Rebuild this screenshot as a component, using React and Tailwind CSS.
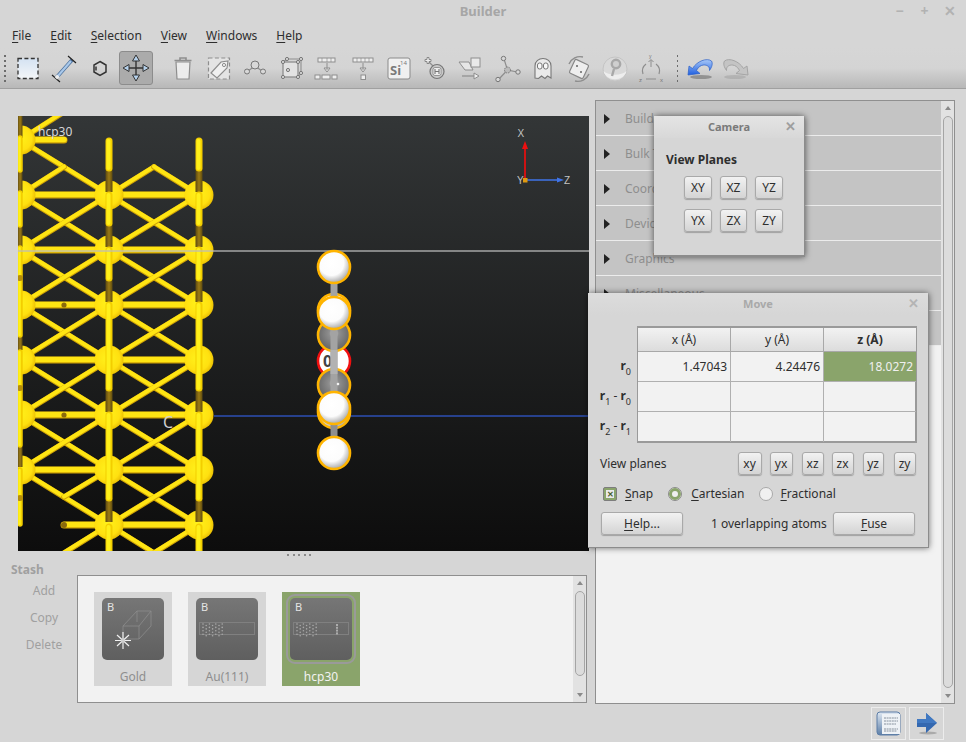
import React from "react";

const G = "#8e8e8e";
const U = ({ c }) => <span className="underline underline-offset-2">{c}</span>;

function Ic({ children, w = 36 }) {
  return (
    <svg width={w} height="36" viewBox={`0 0 ${w} 36`} fill="none" className="shrink-0">
      {children}
    </svg>
  );
}

const ball = (x, y, r = 2.5) => <circle cx={x} cy={y} r={r} fill="#d8d8d8" stroke="#777" strokeWidth="1" />;

const selIcon = (
  <Ic key="a">
    <defs><linearGradient id="sel" x1="0" y1="0" x2="0" y2="1"><stop offset="0" stopColor="#d4e2f2" /><stop offset="1" stopColor="#f4f6f8" /></linearGradient></defs>
    <rect x="8" y="8.5" width="20" height="20" fill="url(#sel)" stroke="#333" strokeWidth="1.3" strokeDasharray="4 2.4" />
  </Ic>
);
const measureIcon = (
  <Ic key="b">
    <path d="M10 28 L26 10" stroke="#4a6f9a" strokeWidth="3.6" />
    <path d="M11 27 L25 11" stroke="#a9c8ea" strokeWidth="2.2" />
    <path d="M6 25 L14 32 M22 6 L30 13" stroke="#222" strokeWidth="1.2" />
    <rect x="9.5" y="25" width="3.5" height="3.5" fill="#eee" transform="rotate(45 11 26.7)" />
  </Ic>
);
const hexIcon = (
  <Ic key="c">
    <path d="M18 11.5 L24 15 V22 L18 25.5 L12 22 V15 Z" stroke="#333" strokeWidth="1.5" fill="none" />
    <path d="M14 16.5 V20.5" stroke="#333" strokeWidth="1.5" />
  </Ic>
);

const toolIcons2 = [
  <Ic key="e">
    <path d="M11 12 H25 L24 29 H12 Z" fill="#ececec" stroke={G} strokeWidth="1.2" />
    <path d="M9.5 10.5 H26.5 M15 10 V8 H21 V10" stroke={G} strokeWidth="1.6" />
  </Ic>,
  <Ic key="f">
    <rect x="7.5" y="8" width="21" height="21" fill="#e4e4e4" stroke={G} strokeWidth="1.2" strokeDasharray="4 2.4" />
    <path d="M10 23 L20 12 L27 11 L26 18 L16 28 Z" fill="#f0f0f0" stroke={G} strokeWidth="1.2" />
    <circle cx="23" cy="15" r="1.6" stroke={G} />
  </Ic>,
  <Ic key="g">
    <path d="M11 21 L18 16 L25 21" stroke={G} strokeWidth="1.2" />
    {ball(18, 15, 4)}{ball(10, 21.5, 2.5)}{ball(26, 21.5, 2.5)}
  </Ic>,
  <Ic key="h">
    <rect x="10" y="12" width="15" height="15" fill="#e2e2e2" stroke={G} strokeWidth="1.3" />
    <path d="M10 12 L14 9 H28 V23 L25 27" stroke={G} strokeWidth="1.1" />
    {ball(10, 12, 1.6)}{ball(25, 12, 1.6)}{ball(10, 27, 1.6)}{ball(25, 27, 1.6)}{ball(14, 9, 1.6)}{ball(28, 9, 1.6)}{ball(28, 23, 1.6)}{ball(15, 20, 1.6)}
  </Ic>,
  <Ic key="i">
    <rect x="9" y="8" width="17" height="4" fill="#eee" stroke={G} />
    <path d="M13 8 V12 M18 8 V12 M22 8 V12" stroke={G} strokeWidth="0.7" />
    <path d="M18 13 V20 M15 18 L18 22 L21 18 Z" stroke={G} fill="#eee" />
    <rect x="6" y="25" width="5" height="4" fill="#eee" stroke={G} /><rect x="13" y="25" width="8" height="4" fill="#eee" stroke={G} /><rect x="23" y="25" width="5" height="4" fill="#eee" stroke={G} />
  </Ic>,
  <Ic key="j">
    <rect x="8" y="8" width="20" height="4" fill="#eee" stroke={G} />
    <path d="M12 8 V12 M16 8 V12 M20 8 V12 M24 8 V12" stroke={G} strokeWidth="0.7" />
    <path d="M18 13 V20 M15 18 L18 22 L21 18 Z" stroke={G} fill="#eee" />
    <rect x="16" y="25" width="4.5" height="4.5" fill="#eee" stroke={G} />
  </Ic>,
];

const toolIcons3 = [
  <Ic key="l">
    <path d="M12 12 L17 17" stroke={G} strokeWidth="1.2" />
    <path d="M8 9.5 H10 V7.5 H12 V9.5 H14 V11.5 H12 V13.5 H10 V11.5 H8 Z" fill="#eee" stroke="#777" strokeWidth="0.8" />
    <circle cx="20" cy="21.5" r="7" fill="#c9c9c9" stroke="#777" strokeWidth="1.2" />
    <rect x="16" y="17.5" width="8" height="8" rx="2" fill="#eee" stroke="#777" strokeWidth="0.7" />
    <path d="M18 19 V24 M22 19 V24 M18 21.5 H22" stroke="#777" strokeWidth="1.1" />
  </Ic>,
  <Ic key="m">
    <path d="M6 12 H16 L20 20 H12 Z" fill="#e6e6e6" stroke={G} />
    <rect x="18" y="8" width="9" height="9" fill="#e9e9e9" stroke={G} />
    <path d="M9 26 H22" stroke={G} strokeWidth="1.2" />
    <path d="M21 23 L26 26 L21 29 Z" fill="#eee" stroke={G} />
  </Ic>,
  <Ic key="n">
    <path d="M18.5 20 L15 9 M18.5 20 L28 22 M18.5 20 L10 29" stroke={G} strokeWidth="1.2" />
    {ball(14.5, 8.5, 2.2)}{ball(29, 22, 2.2)}{ball(9, 29.5, 2.2)}
    <circle cx="18.5" cy="20" r="3" fill="#bbb" stroke="#777" strokeDasharray="1.5 1" />
  </Ic>,
  <Ic key="o">
    <path d="M10 28 V16 C10 6 26 6 26 16 V28 L22.5 26 L20 28.5 L16.5 26 L13.5 28.5 Z" fill="#eaeaea" stroke="#777" strokeWidth="1.1" />
    <rect x="12.5" y="13" width="4.5" height="6" rx="2" fill="#f8f8f8" stroke="#777" />
    <rect x="18.5" y="13" width="4.5" height="6" rx="2" fill="#f8f8f8" stroke="#777" />
  </Ic>,
  <Ic key="p">
    <rect x="10.5" y="11.5" width="15" height="15" rx="1.5" fill="#eee" stroke="#888" strokeWidth="1.2" transform="rotate(25 18 19)" />
    <path d="M8 14 A12 12 0 0 1 22 7 M28 24 A12 12 0 0 1 14 31" stroke={G} strokeWidth="1.4" />
    <circle cx="16" cy="16" r="1" fill="#666" /><circle cx="20" cy="22" r="1" fill="#666" />
  </Ic>,
  <Ic key="q">
    <circle cx="18" cy="19" r="12" fill="#d9d9d9" stroke="#c4c4c4" />
    <path d="M6.5 21 C12 26 24 26 29.5 21 C27 32 9 32 6.5 21 Z" fill="#eeeeee" />
    <circle cx="19" cy="14" r="4.2" stroke="#a8a8a8" strokeWidth="2.4" fill="#cfcfcf" />
    <path d="M17 19 L15 26" stroke="#a8a8a8" strokeWidth="2.4" />
  </Ic>,
  <Ic key="r">
    <path d="M18 17 V10 M15.5 12 L18 9.5 L20.5 12" stroke={G} strokeWidth="1" />
    <path d="M10 24 A9 9 0 0 1 13 14 M26 24 A9 9 0 0 0 23 14 M13 29 H23" stroke={G} strokeWidth="1.2" />
    <text x="16" y="8" fontSize="5" fill="#777" fontFamily="Liberation Sans">y</text>
    <text x="6" y="32" fontSize="6" fill="#777" fontFamily="Liberation Sans">z</text>
    <text x="27" y="32" fontSize="6" fill="#777" fontFamily="Liberation Sans">x</text>
  </Ic>,
];

const Undo = () => (
  <Ic>
    <defs><linearGradient id="un" x1="0" y1="0" x2="0" y2="1"><stop offset="0" stopColor="#a8c8f8" /><stop offset="1" stopColor="#1f5fe0" /></linearGradient></defs>
    <ellipse cx="19" cy="27" rx="11" ry="2" fill="#666" opacity="0.55" />
    <path d="M6 25 L7 16 L10.5 18.5 C15 11 25 7.5 29.5 11 C31 13.5 30 17 27.5 20.5 C28 16 24 14 19.5 15.5 C17 16.5 15.5 18.5 14.5 20.5 L18 23.5 Z" fill="url(#un)" stroke="#2a5fc7" strokeWidth="0.7" />
  </Ic>
);
const Redo = () => (
  <Ic>
    <ellipse cx="17" cy="27" rx="11" ry="2" fill="#999" opacity="0.45" />
    <path d="M30 25 L29 16 L25.5 18.5 C21 11 11 7.5 6.5 11 C5 13.5 6 17 8.5 20.5 C8 16 12 14 16.5 15.5 C19 16.5 20.5 18.5 21.5 20.5 L18 23.5 Z" fill="#c4c4c4" stroke="#a5a5a5" strokeWidth="1" />
  </Ic>
);

const Dots = ({ className }) => (
  <div className={`flex flex-col gap-[3px] ${className}`}>
    {[0, 1, 2, 3, 4, 5].map((i) => <span key={i} className="block w-[1.5px] h-[2px] bg-[#6c6c6c]" />)}
  </div>
);

/* ------- 3D viewport drawing ------- */
const X1 = 20, X2 = 109, X3 = 199, XM1 = 64, XM2 = 154;
const rows = [140, 195, 250, 305, 360, 415, 470, 525];

function bond(x1, y1, x2, y2, k, w = 5.5) {
  return (
    <g key={k}>
      <line x1={x1} y1={y1} x2={x2} y2={y2} stroke="#cfa206" strokeWidth={w} strokeLinecap="round" />
      <line x1={x1} y1={y1 - 0.5} x2={x2} y2={y2 - 0.5} stroke="#ffe513" strokeWidth={w - 1.4} strokeLinecap="round" />
    </g>
  );
}
const hbond = (x1, y, x2, k) => bond(x1, y, x2, y, k, 7);
const dark = (x, y1, y2, k, w = 7) => (
  <rect key={k} x={x - w / 2} y={y1} width={w} height={y2 - y1} fill="url(#darkbar)" />
);
const vbar = (x, y1, y2, k, w = 7) => (
  <g key={k}>
    <line x1={x} y1={y1} x2={x} y2={y2} stroke="#f3ce00" strokeWidth={w} strokeLinecap="round" />
    <line x1={x - 0.5} y1={y1} x2={x - 0.5} y2={y2} stroke="#fff01a" strokeWidth={w - 3} strokeLinecap="round" />
  </g>
);

function Viewport() {
  const b = [];
  for (let i = 1; i < 7; i++) {
    const a = rows[i], c = rows[i + 1];
    b.push(bond(X2, a, X3, c, `d1${i}`));
    b.push(bond(X2, c, X3, a, `d2${i}`));
    b.push(bond(X1, a, X2, c, `d3${i}`));
    if (i < 5) b.push(bond(X1, c, X2, a, `d4${i}`));
  }
  b.push(bond(X1, 470, X2, 415, "d5"));
  b.push(bond(XM1, 497, X2, 470, "d6"));
  b.push(bond(X1, 140, X2, 195, "t1"));
  b.push(bond(X1, 195, XM1, 167, "t2"));
  b.push(bond(X1, 140, XM1, 112, "t3"));
  b.push(bond(X2, 195, XM2, 167, "t4"));
  b.push(bond(XM2, 167, X3, 195, "t5"));
  b.push(bond(X2, 525, XM1, 553, "e1"));
  b.push(bond(X2, 525, XM2, 553, "e2"));
  b.push(bond(X3, 525, XM2, 553, "e3"));
  b.push(hbond(X1, 140, XM1, "h0"));
  rows.slice(1).forEach((y, i) => {
    b.push(hbond(y === 525 ? XM1 : X1, y, X2, `ha${i}`));
    b.push(hbond(X2, y, X3, `hb${i}`));
  });
  const spheres = [];
  rows.forEach((y, i) => {
    if (i < 7) spheres.push(<circle key={`s1${i}`} cx={X1 + 1} cy={y} r="14.5" fill="url(#gold)" />);
    if (i > 0) {
      spheres.push(<circle key={`s2${i}`} cx={X2} cy={y} r="14.5" fill="url(#gold)" />);
      spheres.push(<circle key={`s3${i}`} cx={X3} cy={y} r="14.5" fill="url(#gold)" />);
    }
  });
  const v = [];
  [X2, X3].forEach((x, j) => {
    [[168, 192], [223, 247], [278, 302], [388, 412], [498, 522]].forEach(([a, c], i) =>
      v.push(dark(x, a, c, `dk${j}${i}`)));
    [[141, 168], [195, 223], [250, 278], [305, 388], [415, 498]].forEach(([a, c], i) =>
      v.push(vbar(x, a, c, `v${j}${i}`)));
    v.push(vbar(x, 527, 560, `vz${j}`));
  });
  const x1v = [
    dark(20, 116, 138, "k1", 5), dark(20, 170, 193, "k2", 5), dark(20, 225, 247, "k3", 5), dark(20, 447, 467, "k4", 5), dark(20, 335, 350, "k5", 5),
    vbar(20, 138, 170, "c1a", 5.5), vbar(20, 193, 225, "c1b", 5.5), vbar(20, 248, 335, "c1c", 5.5),
    vbar(20, 352, 445, "c1d", 5.5), vbar(20, 470, 524, "c1e", 5.5),
  ];
  const white = (y, k) => <circle key={k} cx="334" cy={y} r="16" fill="url(#white)" stroke="#ffb400" strokeWidth="2.6" />;
  const grey = (y, k) => <circle key={k} cx="334" cy={y} r="16" fill="url(#grey)" stroke="#ffb400" strokeWidth="2.6" />;

  return (
    <svg width="571" height="435" viewBox="18 116 571 435" className="block absolute inset-0">
      <defs>
        <radialGradient id="gold" cx="0.45" cy="0.45" r="0.6">
          <stop offset="0" stopColor="#fff21a" /><stop offset="0.7" stopColor="#ffe010" /><stop offset="1" stopColor="#e6b800" />
        </radialGradient>
        <radialGradient id="white" cx="0.42" cy="0.38" r="0.7">
          <stop offset="0" stopColor="#ffffff" /><stop offset="0.55" stopColor="#fcfcfc" /><stop offset="1" stopColor="#8f8f8f" />
        </radialGradient>
        <radialGradient id="grey" cx="0.5" cy="0.45" r="0.6">
          <stop offset="0" stopColor="#d8d8d8" /><stop offset="0.25" stopColor="#8f8f8f" /><stop offset="1" stopColor="#5e5e5e" />
        </radialGradient>
        <linearGradient id="darkbar" x1="0" y1="0" x2="1" y2="0">
          <stop offset="0" stopColor="#5e4a10" /><stop offset="0.5" stopColor="#9a7a15" /><stop offset="1" stopColor="#5e4a10" />
        </linearGradient>
      </defs>
      {b}
      {spheres}
      {v}
      {x1v}
      <circle cx="64" cy="305" r="2.6" fill="#8a6a0c" />
      <circle cx="64" cy="415" r="2.6" fill="#8a6a0c" />
      <circle cx="64" cy="525" r="3" fill="#8a6a0c" />
      <circle cx="20" cy="278" r="3" fill="#b58d08" />
      <circle cx="20" cy="388" r="3" fill="#b58d08" />
      <circle cx="20" cy="498" r="3" fill="#b58d08" />
      <line x1="18" y1="251" x2="589" y2="251" stroke="#bdbdbd" strokeWidth="1.6" opacity="0.85" />
      <line x1="214" y1="416" x2="589" y2="416" stroke="#2c4fb4" strokeWidth="1.6" />

      <circle cx="334" cy="361" r="16" fill="#ffffff" stroke="#f01010" strokeWidth="2.6" />
      <text x="323" y="367" fontSize="16" fontWeight="700" fill="#444" fontFamily="Noto Sans, sans-serif">0</text>
      {grey(335, "g1")}{grey(385, "g2")}
      {white(310, "w0")}{white(412, "w1")}
      <rect x="330.5" y="280" width="7" height="140" fill="#a3a3a3" />
      <rect x="330.5" y="350" width="7" height="24" fill="#b2b2b2" />
      <rect x="330.5" y="425" width="7" height="15" fill="#8f8f8f" />
      {white(267, "w2")}{white(313, "w3")}{white(408, "w4")}{white(453, "w5")}
      <circle cx="338" cy="384" r="1.3" fill="#f4f4f4" />

      <text x="163" y="428" fontSize="16" fill="#cfcfcf" fontFamily="Noto Sans, sans-serif">C</text>
      <text x="38" y="136" fontSize="12" fill="#d6d6d6" fontFamily="Noto Sans, sans-serif">hcp30</text>

      <line x1="525" y1="180" x2="525" y2="145" stroke="#e01010" strokeWidth="1.8" />
      <path d="M525 141 L528 149 H522 Z" fill="#ee1010" />
      <line x1="525" y1="180" x2="558" y2="180" stroke="#3f74e8" strokeWidth="1.4" />
      <path d="M564 180 L557 177.5 V182.5 Z" fill="#3f74e8" />
      <rect x="523" y="178" width="4.5" height="4.5" fill="#e09a10" />
      <text x="517.5" y="137" fontSize="10" fill="#c4c4c4" fontFamily="Liberation Sans">X</text>
      <text x="517" y="184" fontSize="10" fill="#c4c4c4" fontFamily="Liberation Sans">Y</text>
      <text x="564" y="184" fontSize="10" fill="#c4c4c4" fontFamily="Liberation Sans">Z</text>
    </svg>
  );
}

/* ------- small widgets ------- */
const btn = "flex items-center justify-center rounded-[3px] border border-[#a9a9a9] bg-gradient-to-b from-[#f2f2f2] to-[#d4d4d4] shadow-[0_1px_1px_rgba(0,0,0,0.25)] text-[#2e2e2e]";

function Scrollbar({ className = "", thumb }) {
  return (
    <div className={`flex flex-col items-center w-[13px] bg-[#e2e2e2] ${className}`}>
      <div className="h-[14px] flex items-center justify-center shrink-0">
        <span className="block border-x-[3.5px] border-x-transparent border-b-[4px] border-b-[#8a8a8a]" />
      </div>
      <div className={`w-[10px] rounded-[5px] border border-[#a5a5a5] bg-[#dcdcdc] ${thumb}`} />
      <div className="flex-1" />
      <div className="h-[14px] flex items-center justify-center shrink-0">
        <span className="block border-x-[3.5px] border-x-transparent border-t-[4px] border-t-[#8a8a8a]" />
      </div>
    </div>
  );
}

function Thumb({ name, sel, children }) {
  return (
    <div className={`w-[78px] h-[94px] flex flex-col items-center pt-[6px] ${sel ? "bg-[#8aa46b] text-[#f2f2f2]" : "bg-[#d6d6d6] text-[#8e8e8e]"}`}>
      <div className={`relative w-[62px] h-[62px] shrink-0 rounded-[5px] bg-gradient-to-b from-[#767676] to-[#5f5f5f] ${sel ? "outline-[2px] outline-offset-[2px] outline-[#9a9a9a]" : ""}`}>
        <span className="absolute left-[5px] top-[1px] text-[11px] leading-[15px] text-[#e4e4e4]">B</span>
        {children}
      </div>
      <span className="mt-[9px] text-[12px] leading-[16px]">{name}</span>
    </div>
  );
}

const Slab = ({ marker }) => (
  <svg width="62" height="62" viewBox="0 0 62 62" className="absolute inset-0">
    <rect x="3.5" y="24.5" width="55" height="12" fill="none" stroke="#808080" />
    {[0, 1, 2, 3, 4, 5, 6].flatMap((i) =>
      [0, 1, 2, 3].map((j) => (
        <circle key={`${i}${j}`} cx={7 + i * 3.2} cy={26 + j * 3.4 + (i % 2) * 1.5} r="0.8" fill="#a8a8a8" />
      ))
    )}
    {marker && <path d="M47 26 V37" stroke="#eee" strokeDasharray="2 0.8" />}
  </svg>
);

const Cube = () => (
  <svg width="62" height="62" viewBox="0 0 62 62" className="absolute inset-0">
    <path d="M21 28 H37 V41 H21 Z M21 28 L35 13 H49 L37 28 M49 13 V28 L37 41 M35 13 V24" stroke="#909090" fill="none" strokeWidth="0.7" />
    <path d="M21 34 V51 M13 42.5 H29 M15 37 L27 48 M27 37 L15 48" stroke="#f0f0f0" strokeWidth="1.2" />
    <circle cx="21" cy="42.5" r="2" fill="#cfcfcf" />
  </svg>
);

const Cell = ({ children, className = "" }) => (
  <div className={`flex items-center justify-end pr-[3px] text-[12px] ${className}`}>{children}</div>
);

const RLabel = ({ children }) => (
  <div className="flex items-center justify-end text-[12px] text-[#2e2e2e] h-[30px] pr-[6px]">{children}</div>
);
const R = ({ n }) => <span className="whitespace-nowrap"><b>r</b><sub className="text-[9px] align-[-3px] leading-none font-normal">{n}</sub></span>;

function MoveDialog() {
  return (
    <div className="absolute left-[588px] top-[293px] w-[341px] h-[255px] bg-[#d6d6d6] rounded-t-[3px] border-b border-r border-[#8c8c8c] shadow-[0_0_6px_rgba(0,0,0,0.55)] flex flex-col z-20">
      <div className="relative h-[22px] shrink-0 flex items-center justify-center text-[11px] font-bold text-[#a9a9a9] pt-[1px] bg-gradient-to-b from-[#dcdcdc] to-[#d6d6d6]">
        Move
        <span className="absolute right-[9px] top-[2px] text-[13px] leading-[16px] text-[#b4b4b4]">✕</span>
      </div>
      <div className="flex pl-[3px] mt-[11px]">
        <div className="w-[46px] mt-[25px]">
          <RLabel><R n="0" /></RLabel>
          <RLabel><span className="whitespace-nowrap"><R n="1" /> - <R n="0" /></span></RLabel>
          <RLabel><span className="whitespace-nowrap"><R n="2" /> - <R n="1" /></span></RLabel>
        </div>
        <div className="w-[280px] h-[117px] border-2 border-[#9a9a9a] border-l-[1.5px] bg-[#f2f2f2] text-[#2e2e2e] grid grid-cols-[93px_93px_92px] grid-rows-[24px_30px_30px_30px]">
          {["x (Å)", "y (Å)"].map((t) => (
            <div key={t} className="flex items-center justify-center text-[12px] bg-gradient-to-b from-[#f2f2f2] to-[#dcdcdc] border-r border-b border-[#a8a8a8]">{t}</div>
          ))}
          <div className="flex items-center justify-center text-[12px] font-bold bg-gradient-to-b from-[#f2f2f2] to-[#dcdcdc] border-b border-[#a8a8a8]">z (Å)</div>
          <Cell className="border-r border-b border-[#b0b0b0]">1.47043</Cell>
          <Cell className="border-r border-b border-[#b0b0b0]">4.24476</Cell>
          <Cell className="bg-[#8aa46b] text-[#f0f0f0] border-b border-[#b0b0b0]">18.0272</Cell>
          <Cell className="border-r border-b border-[#b0b0b0]" /><Cell className="border-r border-b border-[#b0b0b0]" /><Cell className="border-b border-[#b0b0b0]" />
          <Cell className="border-r border-[#b0b0b0]" /><Cell className="border-r border-[#b0b0b0]" /><Cell />
        </div>
      </div>
      <div className="flex items-center pl-[12px] mt-[9px] h-[23px] text-[12px] text-[#2e2e2e]">
        <span>View planes</span>
        <div className="flex ml-[71px]">
          <div className={`${btn} w-[24px] h-[23px]`}>xy</div>
          <div className={`${btn} w-[23px] h-[23px] ml-[8px]`}>yx</div>
          <div className={`${btn} w-[22px] h-[23px] ml-[9px]`}>xz</div>
          <div className={`${btn} w-[22px] h-[23px] ml-[8px]`}>zx</div>
          <div className={`${btn} w-[21px] h-[23px] ml-[9px]`}>yz</div>
          <div className={`${btn} w-[22px] h-[23px] ml-[10px]`}>zy</div>
        </div>
      </div>
      <div className="flex items-center pl-[15px] mt-[8px] h-[22px] text-[12px] text-[#2e2e2e]">
        <span className="flex items-center justify-center w-[14px] h-[14px] bg-[#8aa46b] border border-[#7d7d7d] rounded-[2px]">
          <span className="flex items-center justify-center w-[8px] h-[8px] bg-[#eaeaea] text-[8px] leading-none font-bold text-[#47602c]">✕</span>
        </span>
        <span className="ml-[8px]"><U c="S" />nap</span>
        <span className="ml-[15px] flex items-center justify-center w-[14px] h-[14px] rounded-full bg-[#eeeeee] border border-[#8a8a8a]">
          <span className="block w-[12px] h-[12px] rounded-full border-[3px] border-[#8aa46b] bg-[#efefef]" />
        </span>
        <span className="ml-[9px]"><U c="C" />artesian</span>
        <span className="ml-[14px] w-[14px] h-[14px] rounded-full bg-[#f0f0f0] border border-[#a8a8a8]" />
        <span className="ml-[8px]"><U c="F" />ractional</span>
      </div>
      <div className="flex items-center pl-[13px] mt-[7px] text-[12px] text-[#2e2e2e]">
        <div className={`${btn} w-[82px] h-[23px]`}><span><U c="H" />elp...</span></div>
        <span className="ml-[28px] w-[122px]">1 overlapping atoms</span>
        <div className={`${btn} w-[82px] h-[23px]`}><span><U c="F" />use</span></div>
      </div>
    </div>
  );
}

function CameraDialog() {
  const row1 = ["XY", "XZ", "YZ"], row2 = ["YX", "ZX", "ZY"];
  return (
    <div className="absolute left-[654px] top-[116px] w-[151px] h-[141px] bg-[#d6d6d6] rounded-t-[3px] border-b-2 border-r border-[#8c8c8c] shadow-[0_0_6px_rgba(0,0,0,0.6)] flex flex-col z-10">
      <div className="relative h-[22px] shrink-0 flex items-center justify-center text-[11px] font-bold text-[#7a7a7a] bg-gradient-to-b from-[#e4e4e4] to-[#d8d8d8]">
        Camera
        <span className="absolute right-[8px] top-[2px] text-[13px] leading-[16px] text-[#9e9e9e]">✕</span>
      </div>
      <div className="pl-[12px] mt-[14px] text-[12px] font-bold leading-[16px] text-[#2e2e2e]">View Planes</div>
      {[row1, row2].map((r, i) => (
        <div key={i} className={`flex pl-[30px] text-[12px] ${i === 0 ? "mt-[8px]" : "mt-[10px]"}`}>
          <div className={`${btn} w-[28px] h-[23px]`}>{r[0]}</div>
          <div className={`${btn} w-[27px] h-[23px] ml-[8px]`}>{r[1]}</div>
          <div className={`${btn} w-[28px] h-[23px] ml-[8px]`}>{r[2]}</div>
        </div>
      ))}
    </div>
  );
}

const sections = ["Builders", "Bulk Tools", "Coordinate Tools", "Device Tools", "Graphics", "Miscellaneous", "Selection"];

export default function App() {
  return (
    <div className="relative w-[966px] h-[742px] overflow-hidden bg-[#d6d6d6] flex flex-col text-[12px]" style={{ fontFamily: '"Noto Sans", sans-serif' }}>
      {/* title bar */}
      <div className="relative h-[23px] flex items-center justify-center text-[13px] font-bold text-[#a6a6a6] shrink-0">
        Builder
        <div className="absolute right-[11px] top-[2px] flex gap-[14px] text-[14px] leading-[18px] text-[#b2b2b2] font-bold">
          <span className="w-[11px] text-center">−</span>
          <span className="w-[11px] text-center">+</span>
          <span className="w-[11px] text-center">✕</span>
        </div>
      </div>
      {/* menu */}
      <div className="flex h-[25px] items-center pl-[12px] gap-[19px] text-[#2e2e2e] shrink-0">
        <span><U c="F" />ile</span>
        <span><U c="E" />dit</span>
        <span><U c="S" />election</span>
        <span><U c="V" />iew</span>
        <span><U c="W" />indows</span>
        <span><U c="H" />elp</span>
      </div>
      {/* toolbar */}
      <div className="flex items-center h-[41px] border-b border-[#a0a0a0] bg-gradient-to-b from-[#d6d6d6] via-[#d4d4d4] to-[#b8b8b8] shrink-0 pl-[4px]">
        <Dots />
        <div className="flex items-center ml-[4.5px]">
          {selIcon}
          {measureIcon}
          {hexIcon}
          <div className="mx-[1px] w-[34px] h-[34px] rounded-[3px] bg-[#ababab] border border-[#8c8c8c] flex items-center justify-center">
            <svg width="30" height="30" viewBox="3 3 30 30" fill="none">
              <path d="M18 8 V28 M8 18 H28" stroke="#333" strokeWidth="1.4" />
              <path d="M18 5 L21.5 11 H14.5 Z M18 31 L21.5 25 H14.5 Z M5 18 L11 14.5 V21.5 Z M31 18 L25 14.5 V21.5 Z" fill="#b5d0ea" stroke="#333" strokeWidth="1" />
            </svg>
          </div>
        </div>
        <div className="flex items-center ml-[11px]">
          {toolIcons2}
          <Ic>
            <rect x="7" y="8" width="22" height="21" rx="2" fill="#f0f0f0" stroke="#8a8a8a" strokeWidth="1" />
            <text x="9" y="25" fontSize="13" fontWeight="700" fill="#7a7a7a" fontFamily="Noto Sans, sans-serif">Si</text>
            <text x="19" y="15" fontSize="6" fill="#7a7a7a" fontFamily="Noto Sans, sans-serif">14</text>
          </Ic>
          {toolIcons3}
        </div>
        <Dots className="ml-[7.5px]" />
        <div className="flex items-center ml-[3.5px]">
          <Undo />
          <Redo />
        </div>
      </div>
      {/* body */}
      <div className="flex flex-1 min-h-0 pt-[11px]">
        <div className="w-[589px] shrink-0 pl-[18px] pt-[16px] flex flex-col">
          <div className="relative w-[571px] h-[435px] bg-gradient-to-b from-[#333637] to-[#0d0d0d] overflow-hidden">
            <Viewport />
          </div>
          <div className="flex justify-center h-[8px] items-center gap-[3.5px] ml-[-18px] w-[598px]">
            {[0, 1, 2, 3, 4].map((i) => <span key={i} className="block w-[2px] h-[2px] bg-[#8a8a8a]" />)}
          </div>
          <div className="flex -ml-[18px]">
            <div className="w-[77px] shrink-0 relative text-[#a0a0a0]">
              <div className="pl-[11px] font-bold leading-[16px] mt-[3px]">Stash</div>
              <div className="flex flex-col items-center pl-[11px] mt-[5px] gap-[11px] leading-[16px]">
                <span>Add</span>
                <span>Copy</span>
                <span>Delete</span>
              </div>
            </div>
            <div className="mt-[16px] w-[510px] h-[128px] border border-[#8f8f8f] bg-[#f2f2f2] flex justify-between">
              <div className="flex gap-[16px] pl-[16px] pt-[16px]">
                <Thumb name="Gold"><Cube /></Thumb>
                <Thumb name="Au(111)"><Slab /></Thumb>
                <Thumb name="hcp30" sel><Slab marker /></Thumb>
              </div>
              <Scrollbar thumb="h-[85px] mt-[1px]" />
            </div>
          </div>
        </div>
        <div className="ml-[6px] w-[360px] h-[604px] border border-[#8f8f8f] bg-[#f2f2f2] flex justify-between shrink-0">
          <div className="flex-1 flex flex-col">
            {sections.map((s) => (
              <div key={s} className="h-[35px] bg-[#c4c4c4] border-b border-[#ececec] flex items-center text-[#8e8e8e] pl-[8px] pt-[1px]">
                <span className="block border-y-[5px] border-y-transparent border-l-[6px] border-l-[#222]" />
                <span className="ml-[15px]">{s}</span>
              </div>
            ))}
          </div>
          <Scrollbar thumb="h-[572px] mt-[1px]" />
        </div>
      </div>
      {/* bottom buttons */}
      <div className="absolute right-[22px] top-[707px] flex gap-[3px]">
        <div className="w-[35px] h-[33px] border border-[#ececec] flex items-center justify-center">
          <svg width="25" height="25" viewBox="0 0 25 25">
            <defs><linearGradient id="doc" x1="0" y1="0" x2="0" y2="1"><stop offset="0" stopColor="#dfe8f2" /><stop offset="1" stopColor="#5d7fa8" /></linearGradient></defs>
            <rect x="1" y="1" width="23" height="23" rx="3" fill="url(#doc)" stroke="#5c7da6" />
            <rect x="6" y="3" width="18" height="20" fill="#eef2f6" />
            <path d="M8 7 H22 M8 10 H22 M8 13 H20 M8 18 H22 M8 20 H21" stroke="#7a8794" strokeWidth="0.9" strokeDasharray="2 0.6" />
          </svg>
        </div>
        <div className="w-[35px] h-[33px] border border-[#ececec] flex items-center justify-center">
          <svg width="24" height="24" viewBox="0 0 24 24">
            <ellipse cx="13" cy="21" rx="9" ry="1.5" fill="#aaa" />
            <path d="M2 7 H11 V1 L22 11 L11 21 V15 H2 Z" fill="#3468b0" />
            <path d="M2 7 H11 V1 L22 11 H2 Z" fill="#4179c2" />
          </svg>
        </div>
      </div>
      <CameraDialog />
      <MoveDialog />
    </div>
  );
}
